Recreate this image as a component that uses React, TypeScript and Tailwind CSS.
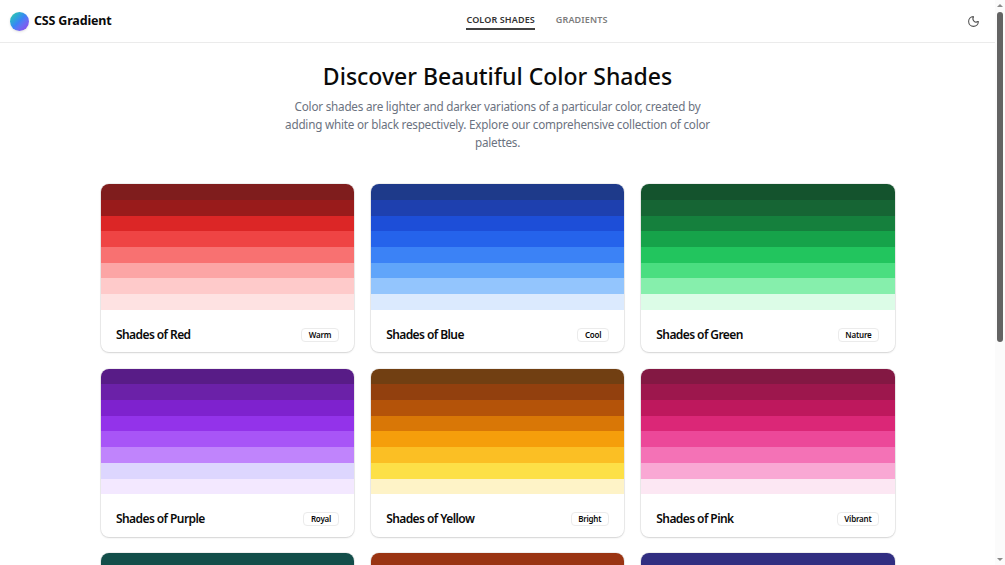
import { useState } from "react"
import { Moon } from "lucide-react"

type Palette = {
  name?: string
  tag?: string
  colors: string[]
}

const palettes: Palette[] = [
  {
    name: "Shades of Red",
    tag: "Warm",
    colors: ["#7f1d1d", "#991b1b", "#dc2626", "#ef4444", "#f87171", "#fca5a5", "#fecaca", "#fee2e2"],
  },
  {
    name: "Shades of Blue",
    tag: "Cool",
    colors: ["#1e3a8a", "#1e40af", "#1d4ed8", "#2563eb", "#3b82f6", "#60a5fa", "#93c5fd", "#dbeafe"],
  },
  {
    name: "Shades of Green",
    tag: "Nature",
    colors: ["#14532d", "#166534", "#15803d", "#16a34a", "#22c55e", "#4ade80", "#86efac", "#dcfce7"],
  },
  {
    name: "Shades of Purple",
    tag: "Royal",
    colors: ["#581c87", "#6b21a8", "#7e22ce", "#9333ea", "#a855f7", "#c084fc", "#ddd6fe", "#f3e8ff"],
  },
  {
    name: "Shades of Yellow",
    tag: "Bright",
    colors: ["#713f12", "#92400e", "#b45309", "#d97706", "#f59e0b", "#fbbf24", "#fde047", "#fef3c7"],
  },
  {
    name: "Shades of Pink",
    tag: "Vibrant",
    colors: ["#831843", "#9d174d", "#be185d", "#db2777", "#ec4899", "#f472b6", "#f9a8d4", "#fce7f3"],
  },
  {
    colors: ["#134e4a", "#115e59", "#0f766e", "#0d9488", "#14b8a6", "#2dd4bf", "#5eead4", "#ccfbf1"],
  },
  {
    colors: ["#9a3412", "#c2410c", "#ea580c", "#f97316", "#fb923c", "#fdba74", "#fed7aa", "#ffedd5"],
  },
  {
    colors: ["#312e81", "#3730a3", "#4338ca", "#4f46e5", "#6366f1", "#818cf8", "#a5b4fc", "#e0e7ff"],
  },
]

const tabs = ["COLOR SHADES", "GRADIENTS"]

function Header() {
  const [active, setActive] = useState(tabs[0])

  return (
    <header className="flex h-[43px] shrink-0 items-center justify-between border-b border-[#ebebeb] pr-[15.5px] pl-2.5">
      <div className="flex items-center gap-[5px]">
        <div className="size-[19px] rounded-full bg-linear-135 from-[#34d399] via-[#3b82f6] to-[#9333ea] shadow-sm" />
        <span className="text-[12.5px] font-bold tracking-[-0.18px] whitespace-nowrap">CSS Gradient</span>
      </div>
      <nav className="mr-1 flex h-full items-start gap-[21px] text-[9px] font-semibold tracking-[0.12px] whitespace-nowrap">
        {tabs.map((tab) => (
          <button
            key={tab}
            onClick={() => setActive(tab)}
            className={`mt-[11px] h-[19px] border-b-2 leading-[18px] ${
              active === tab ? "border-[#404040] text-[#333333]" : "border-transparent text-[#7c7c7c]"
            }`}
          >
            {tab}
          </button>
        ))}
      </nav>
      <button className="text-[#525252]">
        <Moon size={13} strokeWidth={2} />
      </button>
    </header>
  )
}

function PaletteCard({ palette }: { palette: Palette }) {
  return (
    <div className="h-[168px] overflow-hidden rounded-lg bg-white shadow-[0_0_0_1px_rgba(0,0,0,0.06),0_1px_2px_rgba(0,0,0,0.12)]">
      <div className="flex h-[125.5px] flex-col">
        {palette.colors.map((color) => (
          <div key={color} className="flex-1" style={{ backgroundColor: color }} />
        ))}
      </div>
      {palette.name && (
        <div className="flex items-start justify-between px-[15.5px] pt-[17px]">
          <h3 className="text-[12px] leading-4 font-semibold tracking-[-0.58px] whitespace-nowrap">{palette.name}</h3>
          <span className="mt-[1.2px] rounded-[4px] border border-[#ebebeb] px-[6.5px] text-[8px] leading-[12px] font-semibold tracking-[-0.2px] whitespace-nowrap">
            {palette.tag}
          </span>
        </div>
      )}
    </div>
  )
}

export default function App() {
  return (
    <div className="flex h-[565px] overflow-hidden bg-white font-['Noto_Sans',sans-serif] text-[#0a0a0a]">
      <div className="flex w-[995px] flex-col overflow-hidden">
        <Header />
        <main className="mx-auto w-[794px]">
          <div className="pt-[18px] text-center">
            <h1 className="text-[23px] leading-[30px] font-medium whitespace-nowrap">Discover Beautiful Color Shades</h1>
            <p className="mt-[5.7px] text-[11.7px] leading-[18.2px] tracking-[-0.22px] text-[#6b7280] whitespace-nowrap">
              Color shades are lighter and darker variations of a particular color, created by
              <br />
              adding white or black respectively. Explore our comprehensive collection of color
              <br />
              palettes.
            </p>
          </div>
          <div className="mt-[32.9px] grid grid-cols-3 gap-[16.5px]">
            {palettes.map((palette) => (
              <PaletteCard key={palette.colors[0]} palette={palette} />
            ))}
          </div>
        </main>
      </div>
      <div className="flex w-[10px] flex-col items-center justify-between bg-[#fbfbfb] py-1">
        <div className="flex flex-col items-center gap-[5px]">
          <svg width="6" height="3" viewBox="0 0 6 3" fill="#8a8a8a">
            <path d="M3 0L6 3H0z" />
          </svg>
          <div className="h-[330px] w-[6px] rounded-full bg-[#636363]" />
        </div>
        <svg width="6" height="3" viewBox="0 0 6 3" fill="#8a8a8a">
          <path d="M0 0H6L3 3z" />
        </svg>
      </div>
    </div>
  )
}
